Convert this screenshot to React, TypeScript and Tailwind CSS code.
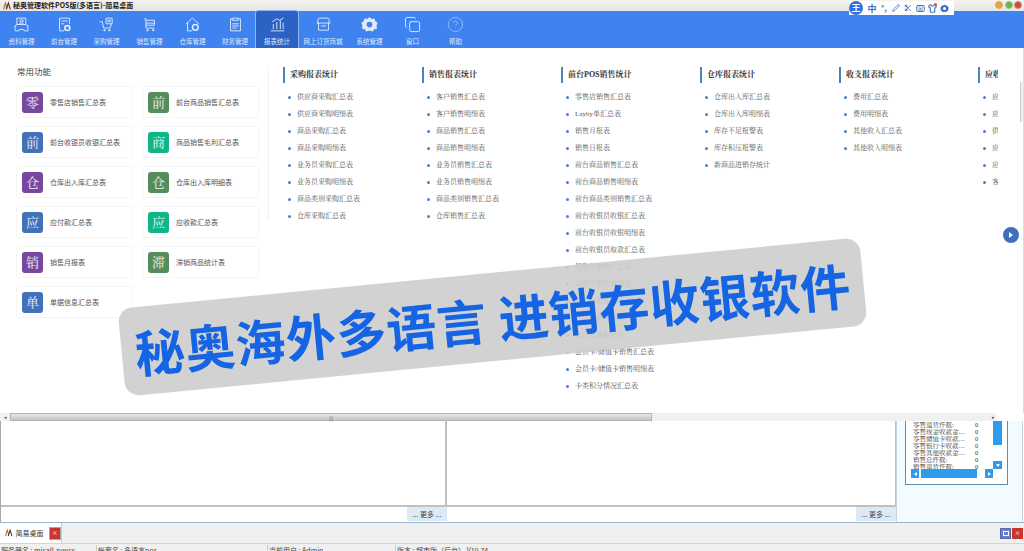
import { Copy, CircleHelp, Scissors, Keyboard, Shirt, Pen } from 'lucide-react';
import type { ReactNode } from 'react';

const Ic = ({ children }: { children: ReactNode }) => (
  <svg viewBox="0 0 24 24" width="17" height="17" fill="none" stroke="currentColor" strokeWidth="1.3" strokeLinecap="round" strokeLinejoin="round">
    {children}
  </svg>
);

const Gear = ({ size, hole }: { size: number; hole: string }) => (
  <svg viewBox="0 0 24 24" width={size} height={size}>
    <path d="M12 1.5l3 2.6 4-.6 1.3 3.8 3.2 2.4L22 13.5l.6 4-3.8 1.2-2.4 3.3L12 20.6 7.600 22l-2.400-3.300-3.800-1.200.6-4L.5 9.700l3.200-2.400L5 3.500l4 .6z" fill="currentColor" />
    <circle cx="12" cy="12" r="4" fill={hole} />
  </svg>
);

const tools: { label: string; w: string; active?: boolean; icon: ReactNode }[] = [
  {
    label: '资料管理', w: 'w-[43px]',
    icon: <Ic><path d="M6 3h12v9H6z" /><circle cx="12" cy="7" r="2" /><path d="M9 11c0-2 6-2 6 0" /><path d="M3 14l3-2M21 14l-3-2M3 14v7h5l1-2h6l1 2h5v-7" /></Ic>,
  },
  {
    label: '前台管理', w: 'w-[42px]',
    icon: <Ic><path d="M11 21H5V3h14v8" /><path d="M8 7h8M8 11h3" /><circle cx="16" cy="17" r="3.500" strokeWidth="2.400" /></Ic>,
  },
  {
    label: '采购管理', w: 'w-[43px]',
    icon: <Ic><path d="M3 8h3l2 9h9l2-6" /><path d="M12 3h8v8h-8z" /><path d="M14 6h4M14 8h3" /><circle cx="9" cy="20" r="1" /><circle cx="16" cy="20" r="1" /></Ic>,
  },
  {
    label: '销售管理', w: 'w-[43px]',
    icon: <Ic><path d="M5 4h2v13h12" /><path d="M7 6h12v7H7" /><path d="M7 10h12" /><circle cx="9" cy="20" r="1" /><circle cx="17" cy="20" r="1" /></Ic>,
  },
  {
    label: '仓库管理', w: 'w-[43px]',
    icon: <Ic><path d="M3 11l9-8 9 8" /><path d="M5 10v11h6" /><circle cx="16" cy="16" r="4" strokeWidth="2.200" /></Ic>,
  },
  {
    label: '财务管理', w: 'w-[42px]',
    icon: <Ic><path d="M7 4H5v17h14V4h-2" /><path d="M8 3h8v3H8z" /><path d="M8 11h8M8 14h8M8 17h5" /></Ic>,
  },
  {
    label: '报表统计', w: 'w-[42px]', active: true,
    icon: <Ic><path d="M3 21h18" /><path d="M6 18v-6M11 18V9M16 18V7M20 18v-8" /><path d="M5 8l6-4 4 2 5-3" /></Ic>,
  },
  {
    label: '网上订货商城', w: 'w-[50px]',
    icon: <Ic><path d="M4 10V6a3 3 0 0 1 3-3h10a3 3 0 0 1 3 3v4" /><path d="M3 10h18" /><path d="M5 10v10h14V10" /><path d="M9 14h6" /></Ic>,
  },
  { label: '系统管理', w: 'w-[43px]', icon: <Gear size={17} hole="#3f83f1" /> },
  { label: '窗口', w: 'w-[43px]', icon: <Copy size={17} strokeWidth={1.3} /> },
  { label: '帮助', w: 'w-[43px]', icon: <CircleHelp size={17} strokeWidth={1} className="opacity-70" /> },
];

const purple = 'bg-[#76479c]';
const green = 'bg-[#558c5c]';
const blue = 'bg-[#4271b9]';
const teal = 'bg-[#0fb487]';

const favorites = [
  ['零', '零售店销售汇总表', purple],
  ['前', '前台商品销售汇总表', green],
  ['前', '前台收银员收银汇总表', blue],
  ['商', '商品销售毛利汇总表', teal],
  ['仓', '仓库出入库汇总表', purple],
  ['仓', '仓库出入库明细表', green],
  ['应', '应付款汇总表', blue],
  ['应', '应收款汇总表', teal],
  ['销', '销售月报表', purple],
  ['滞', '滞销商品统计表', green],
  ['单', '单据信息汇总表', blue],
];

const reportCols: { title: string; items: string[] }[] = [
  {
    title: '采购报表统计',
    items: ['供应商采购汇总表', '供应商采购明细表', '商品采购汇总表', '商品采购明细表', '业务员采购汇总表', '业务员采购明细表', '商品类别采购汇总表', '仓库采购汇总表'],
  },
  {
    title: '销售报表统计',
    items: ['客户销售汇总表', '客户销售明细表', '商品销售汇总表', '商品销售明细表', '业务员销售汇总表', '业务员销售明细表', '商品类别销售汇总表', '仓库销售汇总表'],
  },
  {
    title: '前台POS销售统计',
    items: ['零售店销售汇总表', 'Layby单汇总表', '销售月报表', '销售日报表', '前台商品销售汇总表', '前台商品销售明细表', '前台商品类别销售汇总表', '前台收银员收银汇总表', '前台收银员收银明细表', '前台收银员取款汇总表', '导购员销售汇总表', '导购员销售明细表', '导购员销售提成表', '会员消费明细表', '会员充减积分表', '会员卡/储值卡销售汇总表', '会员卡/储值卡销售明细表', '卡类积分情况汇总表'],
  },
  {
    title: '仓库报表统计',
    items: ['仓库出入库汇总表', '仓库出入库明细表', '库存不足报警表', '库存积压报警表', '新商品进销存统计'],
  },
  {
    title: '收支报表统计',
    items: ['费用汇总表', '费用明细表', '其他收入汇总表', '其他收入明细表'],
  },
  {
    title: '应收应付统计',
    items: ['应付款汇总表', '应付款明细表', '供应商对账表', '应收款汇总表', '应收款明细表', '客户对账表'],
  },
];

const sideRows = ['零售退货件数:', '零售现金收款金…', '零售储值卡收款…', '零售银行卡收款…', '零售其他收款金…', '销售总件数:', '销售退货件数:'];

const Logo = () => (
  <svg viewBox="0 0 12 12" width="8" height="10" fill="none" strokeWidth="1.600">
    <path d="M1 11L3.500 1.500 6 9" stroke="#b5651d" />
    <path d="M5 11L8 1.500 11 11" stroke="#3a2a1a" />
  </svg>
);

const More = () => (
  <div className="w-[40px] h-[14px] bg-[#dde9f4] flex items-center justify-center text-[7px] text-[#444] whitespace-nowrap">... 更多 ...</div>
);

export default function App() {
  return (
    <div className="relative w-[1024px] h-[551px] overflow-hidden bg-white flex flex-col font-['Noto_Sans_CJK_SC','Noto_Sans',sans-serif]">
      {/* Title bar */}
      <div className="h-[11px] shrink-0 flex items-center pl-[3px] gap-[2px] bg-gradient-to-b from-[#f6f3ee] to-[#e6e6e6]">
        <Logo />
        <span className="text-[7px] leading-none font-bold text-[#222] whitespace-nowrap">秘奥管理软件POS版(多语言)-简易桌面</span>
      </div>

      {/* Toolbar */}
      <div className="h-[37px] shrink-0 flex bg-[#3f83f1]">
        {tools.map((t) => (
          <div
            key={t.label}
            className={`${t.w} h-full flex flex-col items-center justify-between pt-[5px] pb-[2px] text-[#dfeafc] ${t.active ? 'bg-[#2a63c4] rounded-t-[2px] outline outline-1 outline-[#8fb6f5]' : ''}`}
          >
            {t.icon}
            <span className="text-[6.5px] leading-[9px] whitespace-nowrap">{t.label}</span>
          </div>
        ))}
      </div>

      {/* Dropdown panel */}
      <div className="relative h-[365px] shrink-0 flex bg-white border-r border-[#dddddd]">
        <div className="w-[268px] shrink-0 pl-[16px] pt-[17px]">
          <div className="pl-[1px] text-[8.500px] leading-[12px] text-[#444]">常用功能</div>
          <div className="mt-[9px] grid grid-cols-[117px_117px] gap-x-[9px] gap-y-[8px]">
            {favorites.map(([ch, label, color]) => (
              <div key={label} className="h-[32px] flex items-center pl-[5px] gap-[7px] rounded-[3px] border border-[#f5f5f5]">
                <div className={`w-[21px] h-[21px] rounded-[3px] flex items-center justify-center text-[13px] leading-none text-white/90 font-['Liberation_Serif','Noto_Serif_CJK_SC',serif] ${color}`}>
                  {ch}
                </div>
                <span className="text-[7px] leading-none whitespace-nowrap text-[#555]">{label}</span>
              </div>
            ))}
          </div>
        </div>

        <div className="self-start mt-[22px] w-px h-[150px] shrink-0 bg-[#efefef]" />

        <div className="w-[729px] shrink-0 overflow-hidden flex pl-[14px] pt-[19px] font-['Liberation_Serif','Noto_Serif_CJK_SC',serif]">
          {reportCols.map((col) => (
            <div key={col.title} className="w-[139px] shrink-0">
              <div className="h-[16px] border-l-2 border-[#4a80c8] pl-[5px] flex items-center text-[8px] font-bold leading-none whitespace-nowrap text-[#333]">
                {col.title}
              </div>
              <ul className="mt-[6px]">
                {col.items.map((it) => (
                  <li key={it} className="h-[17px] flex items-center pl-[5px] text-[7px] whitespace-nowrap text-[#555]">
                    <span className="w-[3px] h-[3px] rounded-full bg-[#4a80c8] mr-[6px] shrink-0" />
                    {it}
                  </li>
                ))}
              </ul>
            </div>
          ))}
        </div>

        <div className="absolute top-[179px] right-[4px] w-[16px] h-[16px] rounded-full bg-[#3f70c0] flex items-center justify-center">
          <span className="w-0 h-0 border-y-[3px] border-y-transparent border-l-[4px] border-l-white" />
        </div>
        <div className="absolute top-[34px] right-0 w-[3px] h-[40px] bg-[#f0f0f0] border-l border-[#cccccc]" />
      </div>

      {/* Horizontal scrollbar */}
      <div className="h-[8px] shrink-0 flex items-center bg-white pr-[28px] relative z-10">
        <div className="w-[10px] h-full bg-[#f0f0f0] flex items-center justify-center text-[5px] text-[#555]">◂</div>
        <div className="w-[642px] h-full bg-gradient-to-b from-[#e8e8e8] to-[#c4c4c4] border border-[#b5b5b5] flex items-center justify-center text-[5px] leading-none text-[#666]">
          |||
        </div>
        <div className="flex-1 h-full bg-[#f0f0f0] flex items-center justify-end pr-[1px] text-[5px] text-[#555]">▸</div>
      </div>

      {/* Lower panes */}
      <div className="h-[101px] shrink-0 flex">
        <div className="w-[447px] flex flex-col border-l border-[#aaaaaa]">
          <div className="h-[86px] border-r-2 border-b-2 border-[#c0c0c0]" />
          <div className="flex-1 flex justify-end"><More /></div>
        </div>
        <div className="w-[449px] flex flex-col">
          <div className="h-[86px] border-r border-b-2 border-[#c0c0c0]" />
          <div className="flex-1 flex justify-end"><More /></div>
        </div>
        <div className="flex-1 mr-[1px] bg-[#f2fbff] border-l border-r border-[#c8d4dc] pl-[8px] pr-[14px]">
          <div className="h-[64px] border border-t-0 border-[#5f8ca8] bg-white flex flex-col overflow-hidden">
            <div className="flex-1 flex min-h-0">
              <div className="flex-1 pl-[7px] pt-[1px] overflow-hidden font-['Liberation_Serif','Noto_Serif_CJK_SC',serif]">
                {sideRows.map((r) => (
                  <div key={r} className="h-[7px] flex items-center text-[6.500px] leading-none text-[#333]">
                    <span className="w-[62px] whitespace-nowrap overflow-hidden">{r}</span>
                    <span>0</span>
                  </div>
                ))}
              </div>
              <div className="w-[9px] mr-[5px] flex flex-col justify-between">
                <div className="h-[24px] bg-[#2f9bec]" />
                <div className="h-[8px] bg-[#2f9bec] flex items-center justify-center">
                  <span className="w-0 h-0 border-x-[2px] border-x-transparent border-t-[3px] border-t-white" />
                </div>
              </div>
            </div>
            <div className="h-[9px] mb-[6px] ml-[5px] mr-[14px] flex justify-between shrink-0 gap-[2px]">
              <div className="w-[8px] bg-[#2f9bec] flex items-center justify-center">
                <span className="w-0 h-0 border-y-[2px] border-y-transparent border-r-[3px] border-r-white" />
              </div>
              <div className="flex-1 bg-[#2f9bec] mr-[6px]" />
              <div className="w-[8px] bg-[#2f9bec] flex items-center justify-center">
                <span className="w-0 h-0 border-y-[2px] border-y-transparent border-l-[3px] border-l-white" />
              </div>
            </div>
          </div>
        </div>
      </div>

      {/* Taskbar */}
      <div className="h-[22px] shrink-0 flex items-center justify-between bg-[#f0f0f0] border-t border-[#9ab7cc] border-b border-b-[#d4d4d4]">
        <div className="w-[62px] h-full bg-white border-r border-[#cccccc] flex items-center pl-[5px] gap-[3px]">
          <Logo />
          <span className="text-[7px] leading-none text-[#333] whitespace-nowrap">简易桌面</span>
          <span className="ml-[2px] w-[13px] h-[13px] bg-[#c9342c] border border-[#a8a8a8] flex items-center justify-center text-[6px] leading-none text-white">×</span>
        </div>
        <div className="flex gap-[1px] pr-[1px]">
          <div className="w-[11px] h-[11px] bg-[#6b7fc9] border border-[#5568b0] flex items-center justify-center">
            <span className="w-[6px] h-[5px] border border-white" />
          </div>
          <div className="w-[11px] h-[11px] bg-[#c9342c] flex items-center justify-center text-[6px] leading-none text-white">×</div>
        </div>
      </div>

      {/* Status bar */}
      <div className="flex-1 bg-[#f0f0f0] flex text-[7px] leading-[11px] text-[#444] whitespace-nowrap overflow-hidden pt-[1px]">
        <div className="w-[97px] pl-[1px] border-r border-[#cccccc]">服务器名 : misall.zywcs</div>
        <div className="w-[171px] pl-[1px] border-r border-[#cccccc]">帐套名 : 多语言pos</div>
        <div className="w-[128px] pl-[1px] border-r border-[#cccccc]">当前用户 : Admin</div>
        <div className="pl-[1px]">版本 : 超市版（后台） V10.74</div>
      </div>

      {/* Input method bar */}
      <div className="absolute top-[1px] left-[849px] h-[14px] w-[105px] flex items-center bg-white text-[#3f70c0]">
        <div className="-mt-[1px] mr-[3px] w-[14px] h-[14px] rounded-full bg-[#2f6fe0] text-white text-[9px] font-bold leading-none flex items-center justify-center">王</div>
        <span className="w-[12px] flex justify-center text-[9px] font-bold leading-none">中</span>
        <span className="w-[12px] flex justify-center text-[8px] font-bold leading-none">°,</span>
        <span className="w-[12px] flex justify-center"><Pen size={8} strokeWidth={2.500} /></span>
        <span className="w-[12px] flex justify-center"><Scissors size={8} strokeWidth={2.500} /></span>
        <span className="w-[12px] flex justify-center"><Keyboard size={9} strokeWidth={2.500} /></span>
        <span className="relative w-[12px] flex justify-center">
          <Shirt size={9} strokeWidth={3} />
          <span className="absolute -top-[1px] right-[1px] w-[3px] h-[3px] rounded-full bg-[#e0483a]" />
        </span>
        <span className="w-[12px] flex justify-center"><Gear size={9} hole="#ffffff" /></span>
      </div>

      {/* Window buttons */}
      <div className="absolute top-[1px] right-[2px] flex gap-[1.500px]">
        <span className="w-[8px] h-[8px] rounded-full bg-[#e9a53a] border border-[#c9b070]" />
        <span className="w-[8px] h-[8px] rounded-full bg-[#6cb24c] border border-[#9cc08c]" />
        <span className="w-[8px] h-[8px] rounded-full bg-[#d4483c] border border-[#c99088]" />
      </div>

      {/* Watermark banner */}
      <div className="absolute left-[120px] top-[273px] w-[745px] h-[88px] rounded-[14px] bg-[#cdcdcd]/90 -rotate-[5.5deg] flex items-center justify-center">
        <span className="text-[50px] leading-none font-bold tracking-[0.5px] whitespace-nowrap text-[#1464e4]">秘奥海外多语言 进销存收银软件</span>
      </div>
    </div>
  );
}
